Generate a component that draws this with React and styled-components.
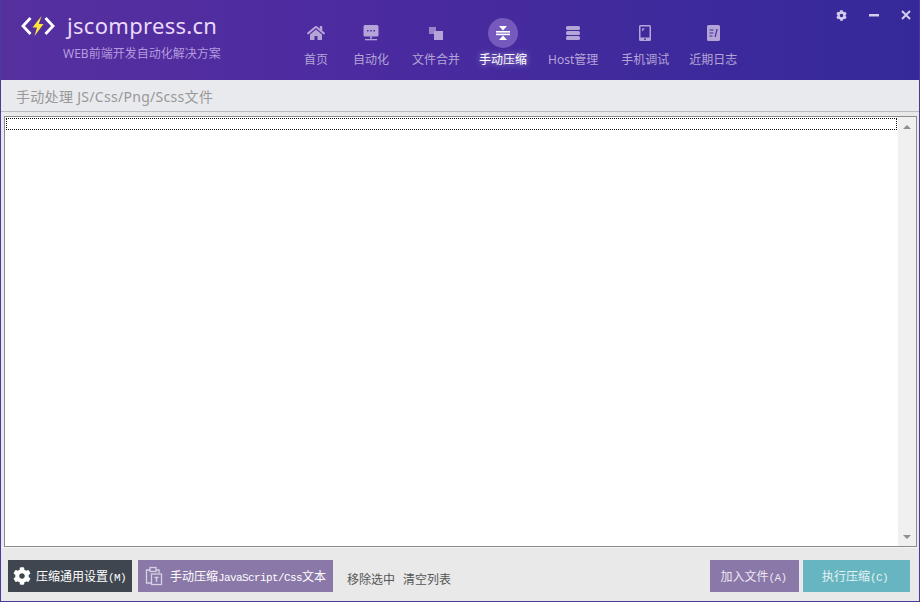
import styled, { createGlobalStyle } from 'styled-components';
import { FaHome, FaCog } from 'react-icons/fa';

const cjk = `"Noto Sans", "Noto Sans CJK SC", sans-serif`;
const mono = `"Liberation Mono", "Noto Sans CJK SC", monospace`;

const Global = createGlobalStyle`
  html, body { margin: 0; padding: 0; }
  body { font-family: ${cjk}; font-size: 12px; }
`;

const Win = styled.div`
  width: 920px;
  height: 602px;
  box-sizing: border-box;
  display: flex;
  flex-direction: column;
  background: #e9e9e9;
  border: 1px solid #4b3a9c;
  border-top: 0;
  overflow: hidden;
`;

const Header = styled.div`
  height: 80px;
  margin: 0 -1px;
  flex: none;
  display: flex;
  background: linear-gradient(90deg, #56309f 0%, #4d2ba0 35%, #3f2a9c 70%, #35299a 100%);
`;

const Brand = styled.div`
  width: 301px;
  flex: none;
  box-sizing: border-box;
  padding: 12px 0 0 21px;
`;

const BrandRow = styled.div`
  display: flex;
  align-items: center;
  gap: 12px;
  height: 28px;
`;

const Title = styled.div`
  font-size: 22px;
  line-height: 28px;
  margin-top: -2px;
  color: #ead9f8;
  letter-spacing: 0.3px;
`;

const Slogan = styled.div`
  margin: 5px 0 0 42px;
  font-size: 12px;
  line-height: 18px;
  color: #b49ade;
  white-space: nowrap;
`;

const Nav = styled.div`
  display: flex;
  padding-top: 18px;
`;

const NavItem = styled.div`
  margin-left: ${(p) => p.$gap}px;
  display: flex;
  flex-direction: column;
  align-items: center;
  color: ${(p) => (p.$active ? '#ffffff' : '#b5a4d8')};
`;

const IconCircle = styled.div`
  width: 30px;
  height: 30px;
  border-radius: 50%;
  display: flex;
  align-items: center;
  justify-content: center;
  background: ${(p) => (p.$active ? '#7659bc' : 'transparent')};
  color: ${(p) => (p.$active ? '#fff' : '#b5a4d8')};
`;

const NavLabel = styled.div`
  margin-top: 3px;
  line-height: 18px;
  white-space: nowrap;
  text-shadow: ${(p) => (p.$active ? '0 0 6px rgba(255,255,255,.6)' : 'none')};
`;

const Controls = styled.div`
  margin-left: auto;
  display: flex;
  align-items: center;
  height: 12px;
  margin-top: 9px;
  padding-right: 9px;
  gap: 22px;
  color: #d6cdec;
`;

const SubBar = styled.div`
  height: 32px;
  flex: none;
  box-sizing: border-box;
  padding-left: 15px;
  display: flex;
  align-items: center;
  background: #e9eaee;
  border-bottom: 1px solid #bcbcc0;
  color: #989898;
  font-size: 14px;
  letter-spacing: 0.3px;
  white-space: nowrap;
`;

const ListArea = styled.div`
  flex: 1;
  min-height: 0;
  padding: 4px 2px 0 3px;
  border-bottom: 1px solid #f4f4f4;
  display: flex;
`;

const ListBox = styled.div`
  flex: 1;
  display: flex;
  box-sizing: border-box;
  background: #fff;
  border: 1px solid #8c8c8c;
`;

const ListBody = styled.div`
  flex: 1;
  padding: 1px 1px 0 1px;
`;

const FocusRow = styled.div`
  height: 10px;
  border: 1px dotted #111;
`;

const Scroll = styled.div`
  width: 18px;
  flex: none;
  background: #f0f0f0;
  display: flex;
  flex-direction: column;
  align-items: center;
  justify-content: space-between;
  padding: 8px 0 7px;
  box-sizing: border-box;
`;

const Arrow = styled.div`
  width: 0;
  height: 0;
  border-left: 4px solid transparent;
  border-right: 4px solid transparent;
  ${(p) => (p.$down ? 'border-top: 4px solid #8f8f8f;' : 'border-bottom: 4px solid #8f8f8f;')}
`;

const Footer = styled.div`
  height: 53px;
  flex: none;
  box-sizing: border-box;
  padding: 12px 9px 0 7px;
  display: flex;
  background: #e9e9e9;
`;

const Btn = styled.div`
  height: 32px;
  box-sizing: border-box;
  display: flex;
  align-items: center;
  justify-content: center;
  flex: none;
  width: ${(p) => p.$w}px;
  margin-right: ${(p) => p.$mr || 0}px;
  padding-right: ${(p) => p.$pr || 0}px;
  background: ${(p) => p.$bg};
  color: ${(p) => p.$fg || '#fff'};
  gap: ${(p) => p.$gap || 0}px;
  white-space: nowrap;
`;

const Latin = styled.span`
  font-family: ${mono};
  font-size: 11px;
  letter-spacing: -0.6px;
`;

const LinkText = styled.div`
  margin-left: ${(p) => p.$ml}px;
  padding-top: 11px;
  line-height: 18px;
  color: #555;
  white-space: nowrap;
`;

const Spacer = styled.div`
  flex: 1;
`;

const MarkSvg = () => (
  <svg width="34" height="22" viewBox="0 0 34 22">
    <path d="M9.500 3 L2 11 L9.500 19" fill="none" stroke="#fff" strokeWidth="2.800" />
    <path d="M24.500 3 L32 11 L24.500 19" fill="none" stroke="#fff" strokeWidth="2.800" />
    <path d="M20.500 1 L11.500 12.500 H16 L13.500 21 L22.500 9 H17.800 Z" fill="#fde63a" />
  </svg>
);

const ChatIcon = () => (
  <svg width="18" height="18" viewBox="0 0 18 18" fill="currentColor">
    <path fillRule="evenodd" d="M3 1h12a1.5 1.5 0 0 1 1.500 1.500V11A1.500 1.500 0 0 1 15 12.500H3A1.500 1.500 0 0 1 1.500 11V2.500A1.500 1.500 0 0 1 3 1ZM5 6v1.500h1.500V6ZM8.200 6v1.500h1.500V6ZM11.500 6v1.500H13V6Z" />
    <rect x="8" y="12.500" width="2" height="2" />
    <rect x="3" y="15" width="12" height="1.300" />
  </svg>
);

const MergeIcon = () => (
  <svg width="16" height="16" viewBox="0 0 16 16" fill="currentColor">
    <rect x="1" y="2" width="7" height="7" opacity="0.75" />
    <rect x="6" y="6" width="9" height="9" />
  </svg>
);

const CompressIcon = () => (
  <svg width="16" height="16" viewBox="0 0 16 16" fill="currentColor">
    <path d="M4 1h8L8 5.500ZM8 10.500 12 15H4Z" />
    <rect x="1" y="6" width="14" height="1.600" />
    <rect x="1" y="8.600" width="14" height="1.600" />
  </svg>
);

const ServerIcon = () => (
  <svg width="16" height="16" viewBox="0 0 16 16" fill="currentColor">
    <rect x="1" y="1" width="14" height="4" rx="1.500" />
    <rect x="1" y="6" width="14" height="4" rx="1.500" />
    <rect x="1" y="11" width="14" height="4" rx="1.500" />
  </svg>
);

const PhoneIcon = () => (
  <svg width="14" height="16" viewBox="0 0 14 16" fill="currentColor">
    <path fillRule="evenodd" d="M2.500 0h9A1.500 1.500 0 0 1 13 1.500v13a1.500 1.500 0 0 1-1.500 1.500h-9A1.500 1.500 0 0 1 1 14.500v-13A1.500 1.500 0 0 1 2.500 0ZM2.500 1.500V12.500h9V1.500ZM6 13.500v1.200h2v-1.200Z" />
    <path d="M4 3.500h3L4 6.500Z" />
  </svg>
);

const LogIcon = () => (
  <svg width="13" height="16" viewBox="0 0 13 16" fill="currentColor">
    <path fillRule="evenodd" d="M1.500 0h10A1.500 1.500 0 0 1 13 1.500v13a1.500 1.500 0 0 1-1.500 1.500h-10A1.500 1.500 0 0 1 0 14.500v-13A1.500 1.500 0 0 1 1.500 0ZM2.500 4.500v1h4v-1ZM2.500 7.500v1h4v-1ZM2.500 10.500v1h3v-1ZM9.500 4 7.500 12h1.200l2-8Z" />
  </svg>
);

const ClipIcon = () => (
  <svg width="18" height="20" viewBox="0 0 18 20" fill="none" stroke="#d8d0e4" strokeWidth="1.300">
    <path d="M5 4H1.500v13H6" />
    <path d="M11 4h3v3" />
    <rect x="5" y="1.500" width="6" height="4" />
    <rect x="6.500" y="8" width="10" height="10.500" />
    <path d="M9.500 11.500h4M11.500 11.500v4.500" />
  </svg>
);

const items = [
  { label: '首页', icon: <FaHome size={18} />, gap: 0 },
  { label: '自动化', icon: <ChatIcon />, gap: 22 },
  { label: '文件合并', icon: <MergeIcon />, gap: 23 },
  { label: '手动压缩', icon: <CompressIcon />, gap: 19, active: true },
  { label: 'Host管理', icon: <ServerIcon />, gap: 21 },
  { label: '手机调试', icon: <PhoneIcon />, gap: 23 },
  { label: '近期日志', icon: <LogIcon />, gap: 20 },
];

const App = () => {
  return (
    <Win>
      <Global />
      <Header>
        <Brand>
          <BrandRow>
            <MarkSvg />
            <Title>jscompress.cn</Title>
          </BrandRow>
          <Slogan>WEB前端开发自动化解决方案</Slogan>
        </Brand>
        <Nav>
          {items.map((it) => (
            <NavItem key={it.label} $gap={it.gap} $active={it.active}>
              <IconCircle $active={it.active}>{it.icon}</IconCircle>
              <NavLabel $active={it.active}>{it.label}</NavLabel>
            </NavItem>
          ))}
        </Nav>
        <Controls>
          <FaCog size={11} />
          <svg width="10" height="12" viewBox="0 0 10 12">
            <rect x="0" y="5" width="10" height="2.500" fill="currentColor" />
          </svg>
          <svg width="10" height="10" viewBox="0 0 10 10">
            <path d="M1 1 L9 9 M9 1 L1 9" stroke="currentColor" strokeWidth="2" />
          </svg>
        </Controls>
      </Header>
      <SubBar>手动处理 JS/Css/Png/Scss文件</SubBar>
      <ListArea>
        <ListBox>
          <ListBody>
            <FocusRow />
          </ListBody>
          <Scroll>
            <Arrow />
            <Arrow $down />
          </Scroll>
        </ListBox>
      </ListArea>
      <Footer>
        <Btn $w={124} $mr={6} $bg="#3f4650" $gap={5} $pr={1}>
          <FaCog size={18} />
          <span>
            压缩通用设置<Latin>(M)</Latin>
          </span>
        </Btn>
        <Btn $w={195} $bg="#8a78a8" $gap={7}>
          <ClipIcon />
          <span>
            手动压缩<Latin>JavaScript/Css</Latin>文本
          </span>
        </Btn>
        <LinkText $ml={14}>移除选中</LinkText>
        <LinkText $ml={8}>清空列表</LinkText>
        <Spacer />
        <Btn $w={89} $mr={4} $bg="#8a78a8" $fg="#ece6f2" $pr={2}>
          <span>
            加入文件<Latin>(A)</Latin>
          </span>
        </Btn>
        <Btn $w={107} $bg="#66b5c0" $fg="#e4f3f5" $pr={3}>
          <span>
            执行压缩<Latin>(C)</Latin>
          </span>
        </Btn>
      </Footer>
    </Win>
  );
};

export default App;
